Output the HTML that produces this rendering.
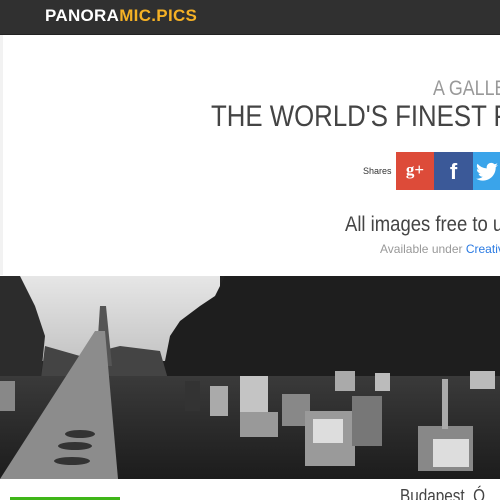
<!DOCTYPE html>
<html><head><style>
html,body{margin:0;width:500px;height:500px;overflow:hidden}
body{background:#fff;font-family:"Liberation Sans",sans-serif;position:relative}
.hdr{position:absolute;left:0;top:0;width:500px;height:34px;background:#303030;border-bottom:1px solid #222}
.logo{position:absolute;left:45px;top:6px;font-weight:bold;font-size:17px;color:#fff;letter-spacing:0.3px}
.logo span{color:#f5b125}
.edge{position:absolute;left:0;top:35px;width:3px;height:240px;background:#f2f2f2}
.t{position:absolute;white-space:nowrap;color:#333;transform-origin:0 0}
.photo{position:absolute;left:0;top:276px;width:500px;height:203px;overflow:hidden;background:#262626}
</style></head><body>
<div class="hdr"><div class="logo">PANORA<span>MIC.PICS</span></div></div>
<div class="edge"></div>
<div class="t" style="left:433px;top:77px;font-size:21px;color:#999;transform:scaleX(0.85)">A GALLERY</div>
<div class="t" style="left:211px;top:100px;font-size:30px;color:#444;transform:scaleX(0.86)">THE WORLD'S FINEST PANO</div>
<div class="t" style="left:363px;top:166px;font-size:9px;color:#333">Shares</div>
<div style="position:absolute;left:396px;top:152px;width:38px;height:38px;background:#dd4b39;color:#fff;font:bold 17px 'Liberation Serif',serif;text-align:center;line-height:36px">g+</div>
<div style="position:absolute;left:434px;top:152px;width:39px;height:38px;background:#3b5998;color:#fff;font:bold 22px 'Liberation Sans',sans-serif;text-align:center;line-height:40px">f</div>
<div style="position:absolute;left:473px;top:152px;width:27px;height:38px;background:#3aa4ea;overflow:hidden;padding:10px 0 0 2px;box-sizing:border-box">
<svg width="24" height="20" viewBox="0 0 24 20"><path d="M23 3c-.8.4-1.7.6-2.6.7.9-.6 1.6-1.5 2-2.5-.9.5-1.9.9-2.9 1.1A4.5 4.5 0 0 0 11.8 6.4 12.8 12.8 0 0 1 2.5 1.7a4.5 4.5 0 0 0 1.4 6 4.4 4.4 0 0 1-2-.6v.1a4.5 4.5 0 0 0 3.6 4.4 4.5 4.5 0 0 1-2 .1 4.5 4.5 0 0 0 4.2 3.1A9 9 0 0 1 1 16.6 12.8 12.8 0 0 0 7.9 18.6c8.3 0 12.8-6.9 12.8-12.8v-.6c.9-.6 1.6-1.4 2.3-2.2z" fill="#fff"/></svg></div>
<div class="t" style="left:345px;top:213px;font-size:21px;color:#444;transform:scaleX(0.88)">All images free to use</div>
<div class="t" style="left:380px;top:242px;font-size:12px;color:#999">Available under <span style="color:#2a7ae2">Creative</span></div>
<div class="photo">
<svg style="position:absolute;left:0;top:0" width="500" height="203">
<defs><linearGradient id="sky" x1="0" y1="0" x2="0" y2="1"><stop offset="0" stop-color="#e6e6e6"/><stop offset="1" stop-color="#c4c4c4"/></linearGradient>
<linearGradient id="gr" x1="0" y1="0" x2="0" y2="1"><stop offset="0" stop-color="#3a3a3a"/><stop offset="1" stop-color="#1c1c1c"/></linearGradient></defs>
<rect width="500" height="203" fill="#222"/>
<rect x="15" y="0" width="205" height="85" fill="url(#sky)"/>
<polygon points="0,0 20,0 35,30 45,60 40,110 0,110" fill="#2c2c2c"/>
<polygon points="160,110 170,60 180,45 200,30 215,20 225,0 500,0 500,110" fill="#1e1e1e"/>
<polygon points="40,110 45,70 80,80 120,70 160,75 170,110" fill="#444"/>
<polygon points="100,30 106,30 112,90 96,90" fill="#555"/>
<rect x="0" y="100" width="500" height="103" fill="url(#gr)"/>
<polygon points="95,55 105,55 118,203 0,203" fill="#8c8c8c"/>
<ellipse cx="80" cy="158" rx="15" ry="4" fill="#333"/><ellipse cx="75" cy="170" rx="17" ry="4" fill="#333"/><ellipse cx="72" cy="185" rx="18" ry="4" fill="#333"/>
<rect x="240" y="100" width="28" height="38" fill="#c4c4c4"/><rect x="240" y="136" width="38" height="25" fill="#999"/>
<rect x="282" y="118" width="28" height="32" fill="#888"/>
<rect x="305" y="135" width="50" height="55" fill="#9a9a9a"/><rect x="313" y="143" width="30" height="24" fill="#ddd"/>
<rect x="352" y="120" width="30" height="50" fill="#777"/>
<rect x="418" y="150" width="55" height="45" fill="#888"/><rect x="433" y="163" width="36" height="28" fill="#ddd"/>
<rect x="442" y="103" width="6" height="50" fill="#aaa"/>
<rect x="335" y="95" width="20" height="20" fill="#aaa"/><rect x="375" y="97" width="15" height="18" fill="#bbb"/>
<rect x="470" y="95" width="25" height="18" fill="#bbb"/><rect x="185" y="105" width="15" height="30" fill="#333"/>
<rect x="210" y="110" width="18" height="30" fill="#aaa"/><rect x="0" y="105" width="15" height="30" fill="#888"/>
</svg>
</div>
<div style="position:absolute;left:10px;top:497px;width:110px;height:3px;background:#3fb618"></div>
<div class="t" style="left:400px;top:486px;font-size:18px;color:#444;transform:scaleX(0.85)">Budapest, Ó</div>
</body></html>
